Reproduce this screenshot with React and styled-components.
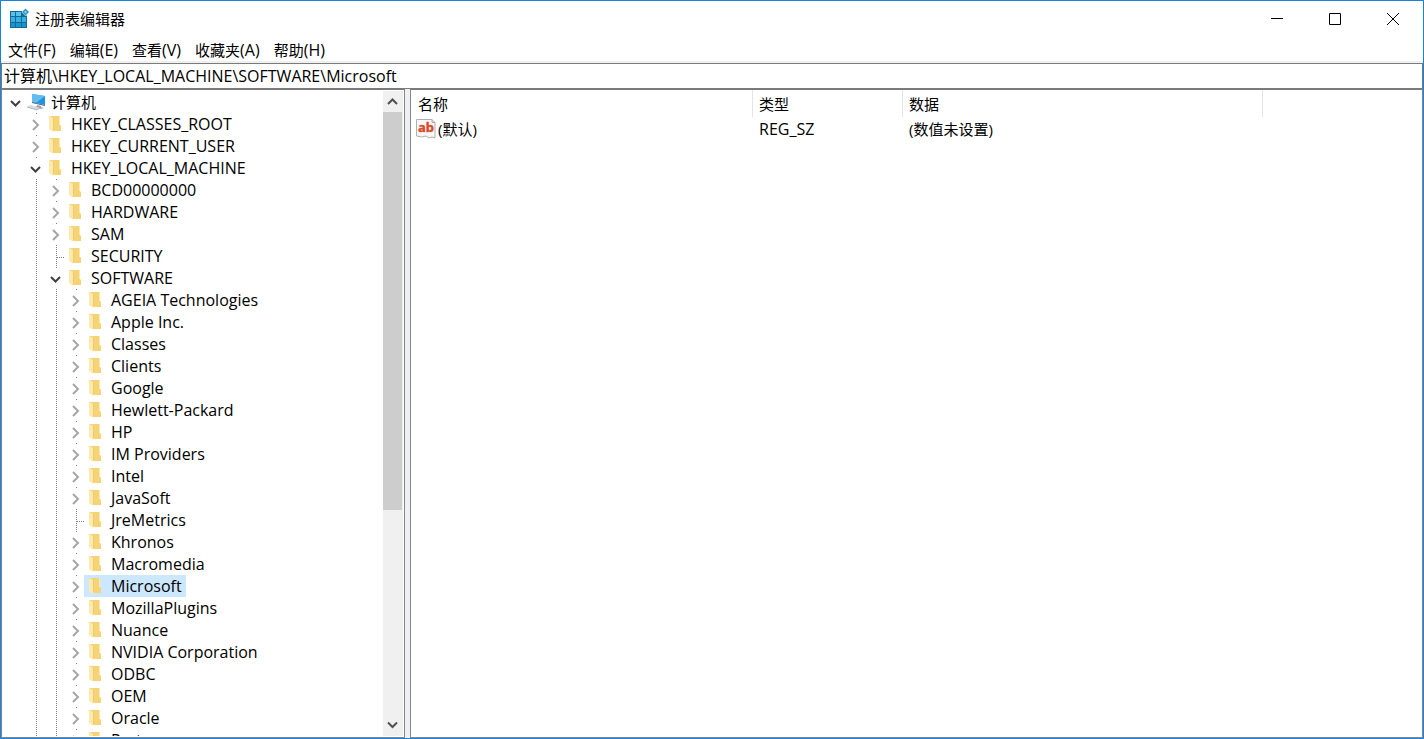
import React, { useState } from 'react';
import styled, { createGlobalStyle, css } from 'styled-components';

const GlobalStyle = createGlobalStyle`
  * {
    box-sizing: border-box;
  }

  body {
    margin: 0;
    background: #fff;
    color: #000;
    font-family: 'Open Sans', 'Noto Sans CJK SC', sans-serif;
    font-size: 15px;
    line-height: 22px;
  }

  button,
  input {
    margin: 0;
    padding: 0;
    border: 0;
    background: none;
    color: inherit;
    font: inherit;
  }
`;

const Window = styled.div`
  display: flex;
  flex-direction: column;
  height: 100vh;
  overflow: hidden;
  border: 1px solid #1a82d8;
`;

const TitleBar = styled.header`
  display: flex;
  align-items: center;
  flex: none;
  height: 35px;
  padding: 0 1px 0 8px;
`;

const Title = styled.h1`
  flex: 1;
  margin: 0 0 0 5px;
  font-size: 15px;
  font-weight: 400;
`;

const WindowButton = styled.button`
  display: grid;
  place-items: center;
  width: 58px;
  height: 35px;
`;

const MenuBar = styled.nav`
  display: flex;
  flex: none;
  gap: 14px;
  height: 27px;
  padding: 2px 7px 0;
  border-bottom: 2px solid #f0f0f0;
`;

const MenuItem = styled.button`
  white-space: nowrap;
`;

const Latin = styled.span`
  font-size: 16px;
`;

const Address = styled.input`
  flex: none;
  width: 100%;
  height: 26px;
  padding: 0 2px 2px;
  border: 1px solid #7a7a7a;
  outline: none;
  font-size: 16px;
`;

const Panes = styled.main`
  display: flex;
  flex: 1;
  min-height: 0;
  background: #f0f0f0;
`;

const Pane = styled.section`
  min-width: 0;
  overflow: hidden;
  border: 1px solid #828790;
  border-top-color: #7a7a7a;
  background: #fff;
`;

const TreePane = styled(Pane)`
  display: flex;
  flex: none;
  width: 404px;
  padding: 1px 1px 1px 0;
`;

const ListPane = styled(Pane)`
  flex: 1;
  margin-left: 5px;
  padding-left: 1px;
`;

const Tree = styled.ul`
  flex: 1;
  margin: 0;
  padding: 0 0 0 4px;
  overflow: hidden;
  list-style: none;
`;

const TreeRow = styled.li`
  display: flex;
  height: 22px;
`;

const dotted = css`
  background-image: repeating-linear-gradient(#808080 0 1px, #fff 1px 2px);
  background-repeat: no-repeat;
  background-position: 10px 0;
`;

const Guide = styled.span`
  flex: none;
  width: 20px;
  ${props => props.$line && dotted}
  background-size: 1px 100%;
`;

const Branch = styled.span`
  flex: none;
  display: grid;
  justify-items: end;
  width: 18px;
  ${props => props.$line && dotted}
  background-size: 1px ${props => (props.$leaf ? '100%' : '1px')};
`;

const LeafLine = styled.span`
  width: 7px;
  height: 1px;
  margin-top: 12px;
  background: repeating-linear-gradient(90deg, #808080 0 1px, #fff 1px 2px);
`;

const Expander = styled.button`
  display: block;
  width: 18px;
  height: 22px;

  svg {
    display: block;
  }
`;

const Node = styled.button`
  display: flex;
  align-items: center;
  height: 22px;
  padding: 0 4px 0 3px;
  background: ${props => (props.$selected ? '#cce8ff' : 'none')};
  font-size: ${props => (props.$root ? '15px' : '16px')};
  white-space: nowrap;

  svg {
    flex: none;
    margin-right: 4px;
  }
`;

const ScrollBar = styled.div`
  display: flex;
  flex-direction: column;
  flex: none;
  width: 20px;
  padding-right: 1px;
  background: #f0f0f0;
`;

const ScrollButton = styled.button`
  display: grid;
  place-items: center;
  height: 21px;
`;

const ScrollTrack = styled.div`
  flex: 1;
`;

const ScrollThumb = styled.div`
  height: 66%;
  background: #cdcdcd;
`;

const ValueTable = styled.table`
  width: 100%;
  border-collapse: separate;
  border-spacing: 0;
  table-layout: fixed;
`;

const HeadCell = styled.th`
  width: ${props => props.$width || 'auto'};
  height: 27px;
  padding: 0 6px;
  border-right: ${props => (props.$width ? '1px solid #e5e5e5' : '0')};
  font-weight: 400;
  text-align: left;
`;

const Cell = styled.td`
  height: 24px;
  padding: 0 6px;
  white-space: nowrap;
`;

const ValueName = styled.span`
  display: flex;
  align-items: center;
  gap: 2px;
  margin-left: -2px;
`;

const RegistryIcon = () => (
  <svg width="21" height="21" viewBox="0 0 21 21" aria-hidden="true">
    <path d="M1 3h13l4 5v12H1z" fill="#17689a" />
    <path d="M2 4h4v4H2zM7 4h5v4H7z" fill="#55c4ec" />
    <path d="M2 9h4v5H2zM7 9h5v5H7zM13 9h4v5h-4z" fill="#35b0e0" />
    <path d="M2 15h4v4H2zM7 15h5v4H7zM13 15h4v4h-4z" fill="#1b93cb" />
    <path d="M16.500 0l4 4-4 4-4-4z" fill="#fff" />
    <path d="M16.500.5L20 4l-3.500 3.500L13 4z" fill="#2f94c4" />
    <path d="M16.500 2.500L18 4l-1.500 1.500L15 4z" fill="#79d2f2" />
  </svg>
);

const ComputerIcon = () => (
  <svg width="20" height="18" viewBox="0 0 20 18" aria-hidden="true">
    <path d="M5 1l13 2v9L5 9z" fill="#2492e0" />
    <path d="M5 1l13 2-9 7-4-1z" fill="#62bdf3" />
    <path d="M5 9l13 3v1L5 10z" fill="#46697f" />
    <path d="M10 12l4 1v1l3 1-4 1-5-2 2-1z" fill="#9aa5ad" />
    <path d="M0 14l3-2 10 3-3 2z" fill="#d6dade" />
    <path d="M0 14l10 3 3-2" fill="none" stroke="#b0b7bc" />
  </svg>
);

const FolderIcon = () => (
  <svg width="20" height="20" viewBox="0 0 20 20" aria-hidden="true">
    <path d="M2 2h11v9l1 1v5H5z" fill="#f5d478" />
    <path d="M12 2h1v9h-1z" fill="#ffe7a8" />
    <path d="M2 2l4 2v14l-4-3z" fill="#ffe9ae" />
    <path d="M6.500 4v12" stroke="#f0cc68" strokeWidth="1" />
  </svg>
);

const StringIcon = () => (
  <svg width="20" height="20" viewBox="0 0 20 20" aria-hidden="true">
    <path d="M.5.5H16l3 3v15.500l-3-1-3 1-3-2-4 1-5.500-1z" fill="#f7f7f7" stroke="#b0b0b0" />
    <path d="M16 .5v3h3" fill="#ddd" stroke="#a8a8a8" />
    <text x="2" y="13" fill="#d9492b" stroke="#d9492b" strokeWidth=".4" fontFamily="Noto Sans" fontSize="13" fontWeight="700">
      ab
    </text>
  </svg>
);

const Chevron = ({ open }) => (
  <svg width="18" height="22" viewBox="0 0 18 22" fill="none" strokeWidth="2" aria-hidden="true">
    {open ? (
      <path d="M5 10l4.500 4.500L14 10" stroke="#404040" />
    ) : (
      <path d="M7 7l5 5-5 5" stroke="#a6a6a6" />
    )}
  </svg>
);

const ScrollArrow = ({ down }) => (
  <svg width="11" height="9" viewBox="0 0 11 9" fill="none" stroke="#505050" strokeWidth="2" aria-hidden="true">
    <path d={down ? 'M1 1.500l4.500 4.500L10 1.500' : 'M1 7l4.500-4.500L10 7'} />
  </svg>
);

const key = (name, children) => ({ name, children });
const leaf = name => ({ name, leaf: true });

const registry = key('计算机', [
  key('HKEY_CLASSES_ROOT'),
  key('HKEY_CURRENT_USER'),
  key('HKEY_LOCAL_MACHINE', [
    key('BCD00000000'),
    key('HARDWARE'),
    key('SAM'),
    leaf('SECURITY'),
    key('SOFTWARE', [
      key('AGEIA Technologies'),
      key('Apple Inc.'),
      key('Classes'),
      key('Clients'),
      key('Google'),
      key('Hewlett-Packard'),
      key('HP'),
      key('IM Providers'),
      key('Intel'),
      key('JavaSoft'),
      leaf('JreMetrics'),
      key('Khronos'),
      key('Macromedia'),
      key('Microsoft'),
      key('MozillaPlugins'),
      key('Nuance'),
      key('NVIDIA Corporation'),
      key('ODBC'),
      key('OEM'),
      key('Oracle'),
      key('Partner'),
    ]),
  ]),
]);

const flatten = (node, depth = 0) => [
  { ...node, depth },
  ...(node.children || []).flatMap(child => flatten(child, depth + 1)),
];

const menus = [
  ['文件', 'F'],
  ['编辑', 'E'],
  ['查看', 'V'],
  ['收藏夹', 'A'],
  ['帮助', 'H'],
];

const RegistryRow = ({ item, selected, onSelect }) => {
  const { name, depth, children } = item;
  const open = Boolean(children);

  return (
    <TreeRow role="treeitem" aria-level={depth + 1} aria-selected={selected}>
      {Array.from({ length: depth }, (_, i) => (
        <Guide key={i} $line={i > 0} />
      ))}
      <Branch $line={depth > 0} $leaf={item.leaf}>
        {item.leaf ? (
          <LeafLine />
        ) : (
          <Expander type="button" aria-label={`${open ? '折叠' : '展开'} ${name}`}>
            <Chevron open={open} />
          </Expander>
        )}
      </Branch>
      <Node type="button" $root={depth === 0} $selected={selected} onClick={() => onSelect(name)}>
        {depth === 0 ? <ComputerIcon /> : <FolderIcon />}
        {name}
      </Node>
    </TreeRow>
  );
};

const App = () => {
  const [selected, setSelected] = useState('Microsoft');
  const [path, setPath] = useState('计算机\\HKEY_LOCAL_MACHINE\\SOFTWARE\\Microsoft');

  return (
    <Window>
      <GlobalStyle />
      <TitleBar>
        <RegistryIcon />
        <Title>注册表编辑器</Title>
        <WindowButton type="button" aria-label="最小化">
          <svg width="12" height="12" stroke="#000">
            <path d="M0 5.500h12" />
          </svg>
        </WindowButton>
        <WindowButton type="button" aria-label="最大化">
          <svg width="12" height="12" fill="none" stroke="#000">
            <path d="M.5.5h11v11H.5z" />
          </svg>
        </WindowButton>
        <WindowButton type="button" aria-label="关闭">
          <svg width="12" height="12" stroke="#000">
            <path d="M0 0l12 12M12 0L0 12" />
          </svg>
        </WindowButton>
      </TitleBar>
      <MenuBar>
        {menus.map(([label, letter]) => (
          <MenuItem key={letter} type="button">
            {label}
            <Latin>({letter})</Latin>
          </MenuItem>
        ))}
      </MenuBar>
      <Address aria-label="地址" value={path} onChange={e => setPath(e.target.value)} />
      <Panes>
        <TreePane>
          <Tree role="tree">
            {flatten(registry).map(item => (
              <RegistryRow
                key={item.name}
                item={item}
                selected={item.name === selected}
                onSelect={setSelected}
              />
            ))}
          </Tree>
          <ScrollBar>
            <ScrollButton type="button" aria-label="向上滚动">
              <ScrollArrow />
            </ScrollButton>
            <ScrollTrack>
              <ScrollThumb />
            </ScrollTrack>
            <ScrollButton type="button" aria-label="向下滚动">
              <ScrollArrow down />
            </ScrollButton>
          </ScrollBar>
        </TreePane>
        <ListPane>
          <ValueTable>
            <thead>
              <tr>
                <HeadCell $width="341px">名称</HeadCell>
                <HeadCell $width="150px">类型</HeadCell>
                <HeadCell $width="360px">数据</HeadCell>
                <HeadCell />
              </tr>
            </thead>
            <tbody>
              <tr>
                <Cell>
                  <ValueName>
                    <StringIcon />
                    (默认)
                  </ValueName>
                </Cell>
                <Cell>
                  <Latin>REG_SZ</Latin>
                </Cell>
                <Cell>(数值未设置)</Cell>
                <Cell />
              </tr>
            </tbody>
          </ValueTable>
        </ListPane>
      </Panes>
    </Window>
  );
};

export default App;
